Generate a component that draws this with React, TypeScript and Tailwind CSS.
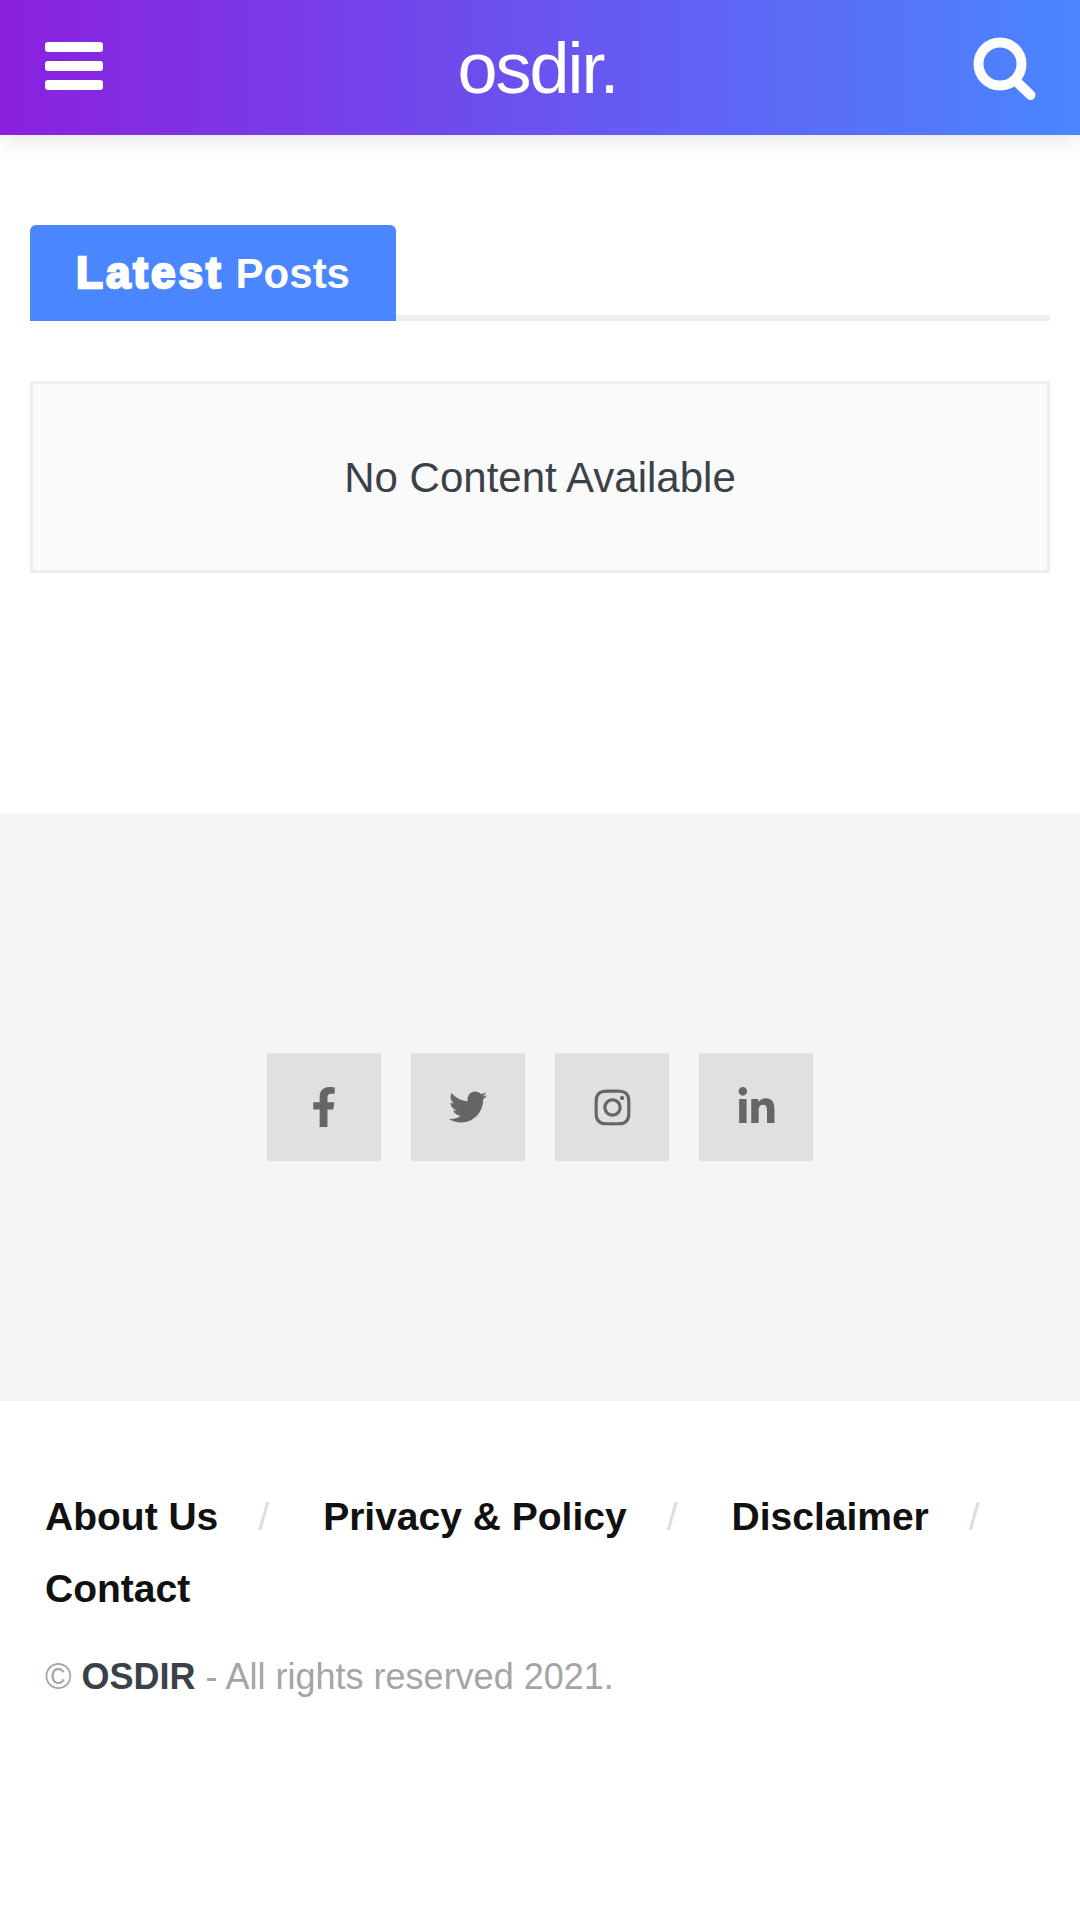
import { FaFacebookF, FaTwitter, FaInstagram, FaLinkedinIn } from "react-icons/fa";

const font = "font-['Liberation_Sans',Arial,sans-serif]";

function Bars() {
  return (
    <div className="mb-[3px] flex w-[58px] flex-col gap-[9px]">
      <span className="block h-[10px] rounded-[3px] bg-white" />
      <span className="block h-[10px] rounded-[3px] bg-white" />
      <span className="block h-[10px] rounded-[3px] bg-white" />
    </div>
  );
}

function Search() {
  return (
    <svg width="64" height="64" viewBox="0 0 64 64" fill="none" stroke="#fff" strokeLinecap="round">
      <circle cx="28" cy="28" r="21.5" strokeWidth="10" />
      <path d="M44 45 L58.5 59" strokeWidth="10" />
    </svg>
  );
}

const socials = [
  { I: FaFacebookF, s: 40, k: "f" },
  { I: FaTwitter, s: 38, k: "t" },
  { I: FaInstagram, s: 41, k: "i" },
  { I: FaLinkedinIn, s: 41, k: "l" },
];

export default function App() {
  return (
    <div className={`${font} min-h-[1920px] bg-white`}>
      <header className="flex h-[135px] items-center justify-between bg-[linear-gradient(to_right,#8a20de,#4a86ff)] pl-[45px] pr-[44px] shadow-[0_5px_20px_rgba(0,0,0,0.1)]">
        <Bars />
        <div className="text-[72px] leading-none tracking-[-2px] text-white">osdir.</div>
        <Search />
      </header>

      <main className="px-[30px] pt-[90px]">
        <div className="flex items-end border-b-[6px] border-[#eeeeee]">
          <h2 className="-mb-[6px] flex h-[96px] w-[366px] items-center justify-center rounded-t-[6px] bg-[#4a86ff] font-bold text-white">
            <span className="flex items-baseline">
              <span className="text-[44px] tracking-[3px] [-webkit-text-stroke:2.5px_#ffffff]">Latest</span>
              <span className="ml-[12px] text-[42px]">Posts</span>
            </span>
          </h2>
        </div>
        <div className="mt-[60px] flex h-[192px] items-center justify-center border-[3px] border-[#eeeeee] bg-[#fafafa] text-[42px] text-[#3b4149]">
          No Content Available
        </div>
      </main>

      <section className="mt-[240px] flex h-[588px] items-center justify-center gap-[30px] bg-[#f5f5f5]">
        {socials.map(({ I, s, k }) => (
          <a key={k} className="flex h-[108px] w-[114px] items-center justify-center bg-[#e0e0e0] text-[#666666]">
            <I size={s} />
          </a>
        ))}
      </section>

      <footer className="px-[45px] pt-[80px]">
        <nav className="flex flex-wrap items-center text-[39px] font-bold leading-[72px] text-[#111111]">
          <a>About Us</a>
          <span className="ml-[40px] mr-[54px] font-normal text-[#dddddd]">/</span>
          <a>Privacy &amp; Policy</a>
          <span className="ml-[40px] mr-[54px] font-normal text-[#dddddd]">/</span>
          <a>Disclaimer</a>
          <span className="ml-[40px] font-normal text-[#dddddd]">/</span>
          <a className="w-full">Contact</a>
        </nav>
        <p className="mt-[24px] text-[36px] leading-[56px] text-[#a5a5a5]">
          © <b className="text-[#3b4149]">OSDIR</b> - All rights reserved 2021.
        </p>
      </footer>
    </div>
  );
}
